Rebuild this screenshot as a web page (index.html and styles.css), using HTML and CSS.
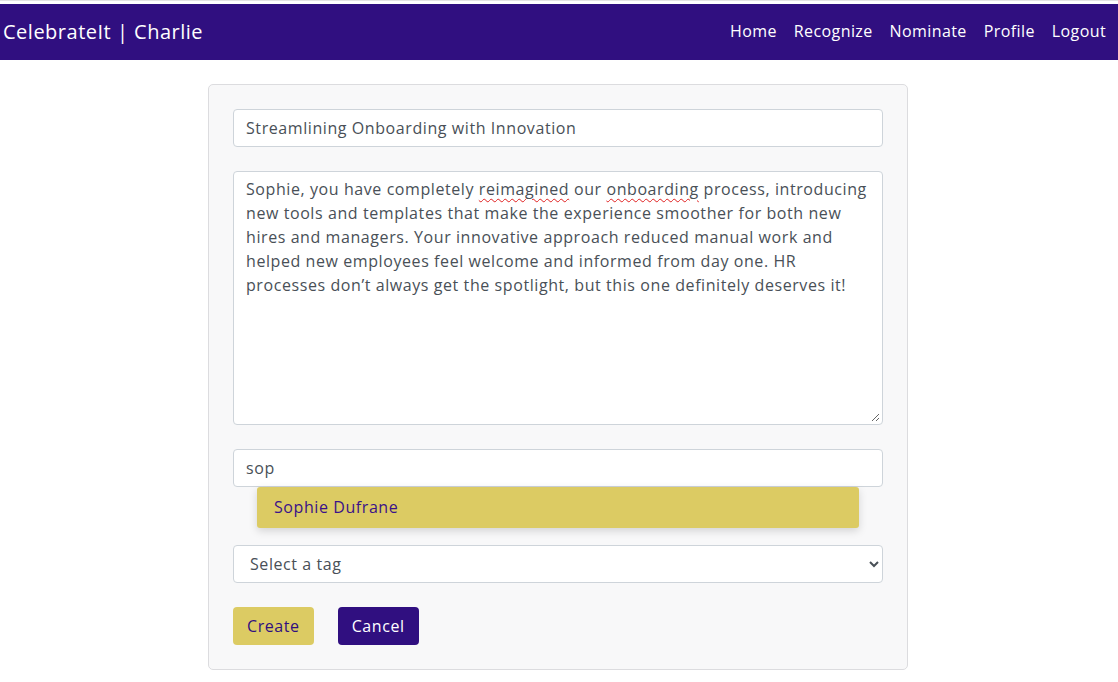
FILE: index.html
```html
<!DOCTYPE html>
<html lang="en">
<head>
<meta charset="utf-8">
<title>CelebrateIt | Charlie</title>
<link rel="stylesheet" href="styles.css">
</head>
<body>
<div class="topline"></div>
<nav class="navbar">
  <a class="brand" href="#">CelebrateIt | Charlie</a>
  <ul class="nav-links">
    <li><a href="#">Home</a></li>
    <li><a href="#">Recognize</a></li>
    <li><a href="#">Nominate</a></li>
    <li><a href="#">Profile</a></li>
    <li><a href="#">Logout</a></li>
  </ul>
</nav>
<main class="page">
  <form class="card">
    <input class="field" type="text" value="Streamlining Onboarding with Innovation">
    <div class="field textarea">
      <div class="ta-text">Sophie, you have completely <span class="spell">reimagined</span> our <span class="spell">onboarding</span> process, introducing<br>new tools and templates that make the experience smoother for both new<br>hires and managers. Your innovative approach reduced manual work and<br>helped new employees feel welcome and informed from day one. HR<br>processes don’t always get the spotlight, but this one definitely deserves it!</div>
      <svg class="grip" width="9" height="9" viewBox="0 0 9 9"><path d="M8 1 L1 8 M8 5 L5 8" stroke="#666" stroke-width="1"/></svg>
    </div>
    <div class="search-group">
      <input class="field" type="text" value="sop">
      <ul class="suggestions">
        <li>Sophie Dufrane</li>
      </ul>
    </div>
    <select class="field select">
      <option>Select a tag</option>
    </select>
    <div class="actions">
      <button type="button" class="btn btn-create">Create</button>
      <button type="button" class="btn btn-cancel">Cancel</button>
    </div>
  </form>
</main>
</body>
</html>
```
FILE: styles.css
```css
* { box-sizing: border-box; }
html, body { margin: 0; padding: 0; background: #fff; }
body {
  font-family: "Open Sans", "Noto Sans", sans-serif;
  color: #495057;
  letter-spacing: 0.58px;
}
.topline {
  height: 4px;
  border-top: 1px solid #e3e3e3;
  background: #fff;
}
.navbar {
  height: 56px;
  background: #300f80;
  display: flex;
  align-items: center;
  justify-content: space-between;
  padding: 0 12px 2px 3px;
}
.brand {
  color: #fff;
  text-decoration: none;
  font-size: 20px;
  letter-spacing: 0.5px;
}
.nav-links {
  list-style: none;
  margin: 0;
  padding: 0;
  display: flex;
  gap: 17px;
}
.nav-links a {
  color: #fff;
  text-decoration: none;
  font-size: 16px;
  letter-spacing: 0.4px;
}
.page {
  display: flex;
  justify-content: center;
  padding-top: 24px;
}
.card {
  width: 700px;
  margin-right: 2px;
  background: #f8f8f9;
  border: 1px solid #dcdcdf;
  border-radius: 5px;
  padding: 24px;
  display: flex;
  flex-direction: column;
  gap: 24px;
}
.field {
  display: block;
  width: 100%;
  height: 38px;
  border: 1px solid #ced4da;
  border-radius: 4px;
  background: #fff;
  font-family: inherit;
  font-size: 16px;
  letter-spacing: inherit;
  color: #495057;
  padding: 6px 12px;
  outline: none;
}
.textarea {
  position: relative;
  height: 254px;
  line-height: 24px;
  padding: 5px 12px;
}
.ta-text { white-space: nowrap; }
.spell {
  text-decoration: underline wavy #e02020;
  text-decoration-thickness: 1px;
  text-underline-offset: 3px;
}
.grip {
  position: absolute;
  right: 2px;
  bottom: 2px;
}
.search-group {
  display: flex;
  flex-direction: column;
}
.suggestions {
  list-style: none;
  margin: 0 24px -7px;
  padding: 0;
  background: #dccb63;
  border-radius: 3px;
  box-shadow: 0 3px 8px rgba(0,0,0,0.15);
}
.suggestions li {
  height: 41px;
  line-height: 41px;
  padding: 0 17px;
  color: #3a1289;
  font-size: 16px;
}
.select {
  padding: 6px 12px;
}
.actions {
  display: flex;
  gap: 24px;
}
.btn {
  height: 38px;
  padding: 0 14px;
  border: none;
  border-radius: 4px;
  font-family: inherit;
  font-size: 16px;
  letter-spacing: inherit;
}
.btn-create { background: #dccb63; color: #300f80; }
.btn-cancel { background: #300f80; color: #fff; }
```
